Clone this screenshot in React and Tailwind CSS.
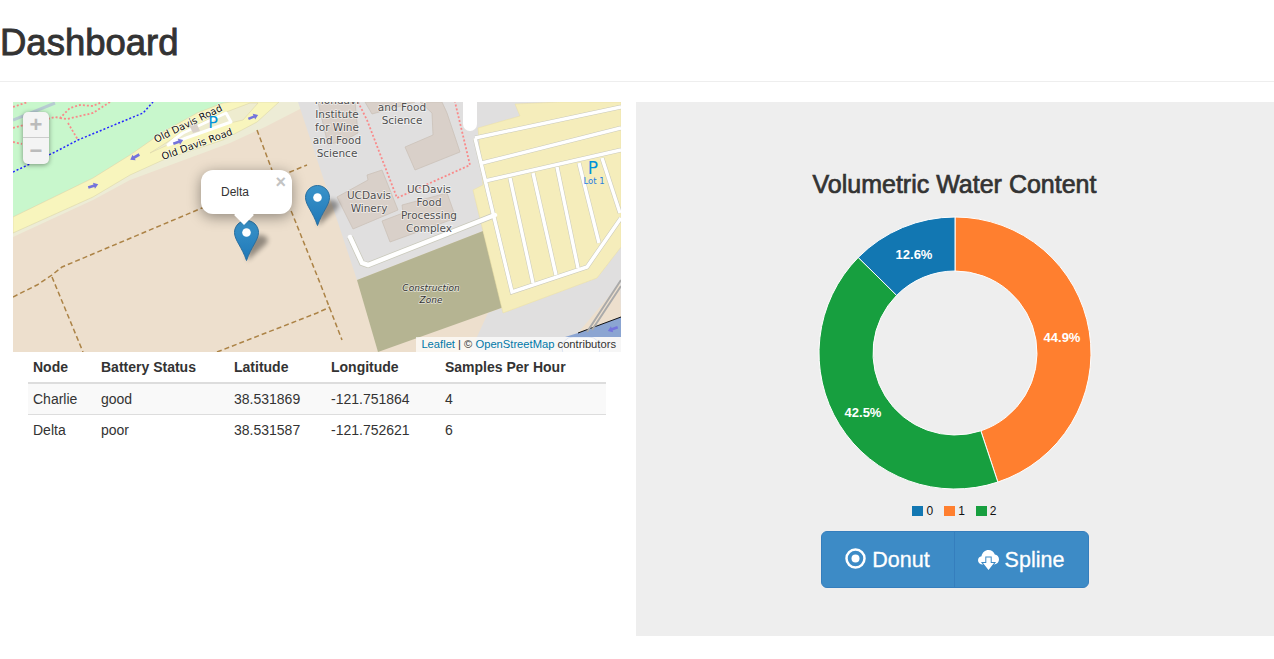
const nodes = [
  { name: 'Charlie', battery: 'good', lat: '38.531869', lng: '-121.751864', rate: 4 },
  { name: 'Delta', battery: 'poor', lat: '38.531587', lng: '-121.752621', rate: 6 },
];

const slices = [
  { pct: 44.9, color: '#ff7f2f', label: '44.9%', x: 1063, y: 337 },
  { pct: 42.5, color: '#179f3f', label: '42.5%', x: 864, y: 412 },
  { pct: 12.6, color: '#1277b2', label: '12.6%', x: 915, y: 254 },
];

const legend = [
  { key: '0', swatch: 'bg-[#1277b2]' },
  { key: '1', swatch: 'bg-[#ff7f2f]' },
  { key: '2', swatch: 'bg-[#179f3f]' },
];

function polar(r, deg) {
  const a = (deg * Math.PI) / 180;
  return [956 + r * Math.sin(a), 353 - r * Math.cos(a)];
}

function arcPath(from, to, outer, inner) {
  const large = to - from > 180 ? 1 : 0;
  const [x1, y1] = polar(outer, from);
  const [x2, y2] = polar(outer, to);
  const [x3, y3] = polar(inner, to);
  const [x4, y4] = polar(inner, from);
  return `M${x1} ${y1}A${outer} ${outer} 0 ${large} 1 ${x2} ${y2}L${x3} ${y3}A${inner} ${inner} 0 ${large} 0 ${x4} ${y4}Z`;
}

function Donut() {
  let angle = 0;
  return (
    <svg viewBox="818 215 276 276" className="w-[276px] h-[276px] mt-[18px] block">
      {slices.map((s) => {
        const from = angle;
        angle += (s.pct / 100) * 360;
        return <path key={s.label} d={arcPath(from, angle, 136, 82)} fill={s.color} stroke="#fff" strokeWidth="1" />;
      })}
      {slices.map((s) => (
        <text key={s.label} x={s.x} y={s.y + 4.5} textAnchor="middle" fill="#fff" fontSize="13" fontWeight="700" fontFamily="'Liberation Sans', sans-serif">
          {s.label}
        </text>
      ))}
    </svg>
  );
}

function Pin({ x, y }) {
  // x, y is the tip of the marker
  return (
    <g transform={`translate(${x - 12.5} ${y - 41})`}>
      <path d="M12.5 40.5C17 27 24.5 20 24.5 12.5c0-6.6-5.4-12-12-12S.5 5.900.5 12.500c0 7.500 7.500 14.500 12 28z" fill="url(#pinFill)" stroke="#2a6f9f" strokeWidth="1" />
      <circle cx="12.5" cy="12.5" r="4.300" fill="#fff" />
    </g>
  );
}

function PinShadow({ x, y }) {
  return <path d={`M${x} ${y}L${x + 19} ${y - 17}Q${x + 24} ${y - 24} ${x + 14} ${y - 26}Q${x + 6} ${y - 27} ${x + 2} ${y - 18}Z`} fill="#000" opacity="0.38" filter="url(#pinBlur)" />;
}

function OneWay({ x, y, rot }) {
  return (
    <g transform={`translate(${x} ${y}) rotate(${rot})`}>
      <path d="M-5 -1.300H1V-3.200L5.500 0 1 3.200V1.300H-5Z" fill="#7474dc" />
    </g>
  );
}

function MapLabel({ x, y, children, size = 10.500, italic = false, color = '#4f4f4f' }) {
  return (
    <text
      x={x}
      y={y}
      textAnchor="middle"
      fontSize={size}
      fontStyle={italic ? 'italic' : 'normal'}
      fontFamily="'DejaVu Sans', sans-serif"
      fill={color}
      stroke="#fff"
      strokeOpacity="0.6"
      strokeWidth="1.500"
      className="[paint-order:stroke]"
    >
      {children}
    </text>
  );
}

function LeafletMap() {
  const dividers = [
    [510, 178, 533, 283],
    [533, 173, 556, 275],
    [557, 167, 578, 268],
    [579, 163, 599, 243],
    [602, 158, 620, 213],
  ];
  return (
    <div className="relative h-[250px] overflow-hidden bg-[#eddfcd]">
      <svg viewBox="13 102 608 250" className="block w-[608px] h-[250px]">
        <defs>
          <linearGradient id="pinFill" x1="0" y1="0" x2="0" y2="1">
            <stop offset="0" stopColor="#3a93c9" />
            <stop offset="1" stopColor="#1f78b8" />
          </linearGradient>
          <filter id="pinBlur" x="-50%" y="-50%" width="200%" height="200%">
            <feGaussianBlur stdDeviation="2.500" />
          </filter>
        </defs>

        {/* park and road */}
        <path d="M13 102H232L223 103L197 113L163 132L130 155L93 178L13 217Z" fill="#c8f7cc" />
        <path d="M13 237L93 200L130 180L230 143L265 127L300 109L317 102H270L200 130L13 225Z" fill="#edecd6" />
        <path d="M13 217L93 178L130 155L163 132L197 113L223 103L232 102H279L257 122L223 140L163 160L130 175L93 197L13 233Z" fill="#f8f5bd" stroke="#d8d2a4" strokeWidth="0.500" />
        <path d="M150 153L183 132L213 117L250 103H258L243 120L230 123L183 138Z" fill="#eeeccf" stroke="#d8d2a4" strokeWidth="0.500" />
        <path d="M183 133L226 113L231 122L186 138L168 145L176 138Z" fill="none" stroke="#fff" strokeWidth="3" strokeLinejoin="round" />
        <path d="M189 125L196 122L200 131L193 133Z" fill="#d9d0c9" />
        <path d="M13 120L55 103" stroke="#b7ccd2" strokeWidth="3" fill="none" />
        <g fill="none" stroke="#f98a8a" strokeWidth="1.800" strokeDasharray="2 2">
          <path d="M13 128L55 117L60 118L70 108L80 105L93 106L102 102" />
          <path d="M60 118L67 119L93 113L110 102" />
          <path d="M68 123L78 140" />
          <path d="M13 142L22 144" />
          <path d="M13 107L28 102" />
        </g>
        <path d="M13 172L55 152L78 140L143 113L153 102" fill="none" stroke="#2525ff" strokeWidth="1.500" strokeDasharray="2 2" />

        {/* campus */}
        <path d="M298 102H621V352H470L488 313L504 307L483 231L357 280Z" fill="#e0dfdf" />
        <path d="M357 280L483 231L504 307L378 352Z" fill="#b5b492" />
        <path d="M478 128L520 116L515 104L560 102H621V247L597 278L503 313L473 190L483 185Z" fill="#f5edbb" stroke="#eadfa5" strokeWidth="0.500" />
        <path d="M620 283L578 333L621 317Z" fill="#eddfcd" />
        <path d="M578 333L621 317V337H565Z" fill="#8ba5d2" />
        <path d="M578 333L621 317" stroke="#111" strokeWidth="1" />
        <path d="M621 280L587 332M621 286L592 330" stroke="#aaa" strokeWidth="2" fill="none" />
        <rect x="562" y="337" width="38" height="22" rx="11" fill="#f2f2ee" stroke="#8ba5d2" strokeWidth="1" />

        <g fill="#d9d0c9" stroke="#c8beb5" strokeWidth="0.700">
          <path d="M318 102H355L358 133L345 140L328 145Z" />
          <path d="M365 102L372 114L415 102Z" />
          <path d="M420 102L432 113L433 135L405 147L415 170L460 152L447 113L442 102Z" />
          <path d="M337 197L368 180L367 175L382 170L398 210L353 229Z" />
          <path d="M382 221L403 213L402 205L447 193L456 218L390 242Z" />
        </g>
        <path d="M358 102L367 120L397 198L470 165L455 102" fill="none" stroke="#f98a8a" strokeWidth="1.800" strokeDasharray="2 2" />

        {/* parking lot lanes */}
        <g fill="none" stroke="#c9c9bb" strokeWidth="4.500">
          <path d="M475 138L621 107M482 163L621 128M485 181L621 150M475 138L512 292L587 267L621 218" />
          {dividers.map((d) => <path key={d[0]} d={`M${d[0]} ${d[1]}L${d[2]} ${d[3]}`} />)}
          <path d="M350 237L362 263L368 265L495 215" strokeWidth="6" />
        </g>
        <g fill="none" stroke="#fff" strokeWidth="3.500">
          <path d="M475 138L621 107M482 163L621 128M485 181L621 150M475 138L512 292L587 267L621 218" />
          {dividers.map((d) => <path key={d[0]} d={`M${d[0]} ${d[1]}L${d[2]} ${d[3]}`} />)}
          <path d="M350 237L362 263L368 265L495 215" strokeWidth="4.500" strokeLinecap="round" />
        </g>
        <path d="M470 100V124" stroke="#fff" strokeWidth="14" strokeLinecap="round" />

        {/* tracks */}
        <g fill="none" stroke="#ac8346" strokeWidth="1.500" strokeDasharray="5 3">
          <path d="M13 297L37 285L52 275L62 267L202 208L307 165" />
          <path d="M52 277L83 352" />
          <path d="M257 130L272 170L292 213L320 283L342 340" />
          <path d="M217 352L317 313L330 307" />
        </g>

        <OneWay x={93} y={186} rot={-18} />
        <OneWay x={135} y={157} rot={150} />
        <OneWay x={178} y={142} rot={-20} />
        <OneWay x={253} y={117} rot={-22} />
        <OneWay x={613} y={329} rot={160} />

        <g fontFamily="'DejaVu Sans', sans-serif" fontSize="9.800" fill="#111" stroke="#fff" strokeOpacity="0.6" strokeWidth="1.500" className="[paint-order:stroke]">
          <text transform="translate(156 143) rotate(-26)">Old Davis Road</text>
          <text transform="translate(163 160) rotate(-20)">Old Davis Road</text>
        </g>
        <text x="213" y="128" textAnchor="middle" fontSize="16" fill="#0092da" fontFamily="'DejaVu Sans', sans-serif">P</text>

        <MapLabel x={337} y={104}>Mondavi</MapLabel>
        <MapLabel x={337} y={118}>Institute</MapLabel>
        <MapLabel x={337} y={131}>for Wine</MapLabel>
        <MapLabel x={337} y={144}>and Food</MapLabel>
        <MapLabel x={337} y={157}>Science</MapLabel>
        <MapLabel x={402} y={111}>and Food</MapLabel>
        <MapLabel x={402} y={124}>Science</MapLabel>
        <MapLabel x={369} y={199}>UCDavis</MapLabel>
        <MapLabel x={369} y={212}>Winery</MapLabel>
        <MapLabel x={429} y={193}>UCDavis</MapLabel>
        <MapLabel x={429} y={206}>Food</MapLabel>
        <MapLabel x={429} y={219}>Processing</MapLabel>
        <MapLabel x={429} y={232}>Complex</MapLabel>
        <MapLabel x={431} y={291} size={9} italic color="#333">Construction</MapLabel>
        <MapLabel x={431} y={303} size={9} italic color="#333">Zone</MapLabel>
        <text x="593" y="174" textAnchor="middle" fontSize="17" fill="#0092da" fontFamily="'DejaVu Sans', sans-serif">P</text>
        <text x="594" y="184" textAnchor="middle" fontSize="8.500" fill="#2c7fe0" fontFamily="'DejaVu Sans', sans-serif">Lot 1</text>

        <PinShadow x={247} y={261} />
        <PinShadow x={318} y={226} />
        <Pin x={246.500} y={261} />
        <Pin x={317.500} y={226} />
      </svg>

      {/* zoom control */}
      <div className="absolute left-[10px] top-[10px] w-[26px] rounded-[5px] bg-[#f4f4f4] shadow-[0_1px_5px_rgba(0,0,0,0.4)] text-[#bbb] text-center font-bold">
        <div className="h-[26px] leading-[26px] text-[22px] border-b border-[#ccc]">+</div>
        <div className="h-[26px] leading-[26px] text-[22px]">−</div>
      </div>

      {/* popup */}
      <div className="absolute left-[188px] top-[68px] w-[91px] h-[44px] rounded-[12px] bg-white shadow-[0_3px_14px_rgba(0,0,0,0.4)] text-[#333]">
        <div className="absolute left-[36px] top-[38px] w-[14px] h-[14px] rotate-45 bg-white" />
        <div className="relative pl-[20px] pt-[14px] text-[12px] leading-[16px]">Delta</div>
        <div className="absolute right-[6px] top-[3px] text-[18px] leading-[18px] font-bold text-[#c3c3c3]">×</div>
      </div>

      {/* attribution */}
      <div className="absolute right-0 bottom-0 h-[15px] px-[5px] bg-white/70 text-[11.200px] leading-[15px] text-[#333] whitespace-nowrap">
        <span className="text-[#0078a8]">Leaflet</span> | © <span className="text-[#0078a8]">OpenStreetMap</span> contributors
      </div>
    </div>
  );
}

function NodeTable() {
  return (
    <table className="w-[578px] mx-[15px] table-fixed border-collapse text-[14px] leading-[20px] text-[#333]">
      <colgroup>
        <col className="w-[68px]" />
        <col className="w-[133px]" />
        <col className="w-[97px]" />
        <col className="w-[114px]" />
        <col />
      </colgroup>
      <thead>
        <tr className="border-b-2 border-[#ddd]">
          {['Node', 'Battery Status', 'Latitude', 'Longitude', 'Samples Per Hour'].map((h) => (
            <th key={h} className="px-[5px] py-[5px] text-left font-bold">{h}</th>
          ))}
        </tr>
      </thead>
      <tbody>
        {nodes.map((n, i) => (
          <tr key={n.name} className={i === 0 ? 'bg-[#f9f9f9] border-b border-[#ddd]' : ''}>
            <td className="px-[5px] py-[5px]">{n.name}</td>
            <td className="px-[5px] py-[5px]">{n.battery}</td>
            <td className="px-[5px] py-[5px]">{n.lat}</td>
            <td className="px-[5px] py-[5px]">{n.lng}</td>
            <td className="px-[5px] py-[5px]">{n.rate}</td>
          </tr>
        ))}
      </tbody>
    </table>
  );
}

function ChartPanel() {
  return (
    <div className="flex-1 h-[534px] bg-[#eee] flex flex-col items-center pt-[69px] pr-[1px]">
      <h2 className="text-[25px] leading-[26px] text-[#333] [-webkit-text-stroke:0.700px_#333]">Volumetric Water Content</h2>
      <Donut />
      <div className="flex items-center mt-[13px] text-[12px] leading-[14px] text-[#111]">
        {legend.map((l) => (
          <div key={l.key} className="flex items-center mr-[11px] last:mr-0">
            <span className={`w-[11px] h-[10px] mr-[3px] ${l.swatch}`} />
            {l.key}
          </div>
        ))}
      </div>
      <div className="flex mt-[13px] w-[268px] h-[57px] rounded-[6px] border border-[#357ebd] bg-[#3d8bc6] text-white text-[21.500px] [-webkit-text-stroke:0.300px_#fff]">
        <button className="w-[133px] flex items-center justify-center gap-[6px] border-r border-[#357ebd] pt-[2px]">
          <svg viewBox="0 0 21 21" className="w-[21px] h-[21px] -mt-[4px]">
            <circle cx="10.500" cy="10.500" r="9" fill="none" stroke="#fff" strokeWidth="2.500" />
            <circle cx="10.500" cy="10.500" r="4" fill="#fff" />
          </svg>
          Donut
        </button>
        <button className="flex-1 flex items-center justify-center gap-[6px] pt-[2px]">
          <svg viewBox="0 0 21 22" className="w-[21px] h-[22px] -mt-[2px]">
            <path d="M4.500 15.500C2 15.500 0 13.600 0 11.200c0-2 1.500-3.700 3.500-4C4.300 3.500 7 1 10.500 1c3 0 5.500 1.900 6.300 4.500 2.400.3 4.200 2.300 4.200 4.800 0 2.900-2.200 5.200-5 5.200z" fill="#fff" />
            <path d="M8.300 8.500h4.400v5.500h3.300l-5.500 7-5.500-7h3.300z" fill="#3d8bc6" stroke="#3d8bc6" strokeWidth="2" />
            <path d="M8.300 8.500h4.400v5.500h3.300l-5.500 7-5.500-7h3.300z" fill="#fff" />
          </svg>
          Spline
        </button>
      </div>
    </div>
  );
}

export default function App() {
  return (
    <div className="min-h-[659px] bg-white font-['Liberation_Sans',Arial,sans-serif]">
      <div className="h-[82px] border-b border-[#eee] pt-[23px]">
        <h1 className="text-[36.500px] leading-[40px] text-[#333] [-webkit-text-stroke:0.900px_#333]">Dashboard</h1>
      </div>
      <div className="flex gap-[15px] pt-[20px]">
        <div className="w-[608px] ml-[13px]">
          <LeafletMap />
          <NodeTable />
        </div>
        <ChartPanel />
      </div>
    </div>
  );
}
